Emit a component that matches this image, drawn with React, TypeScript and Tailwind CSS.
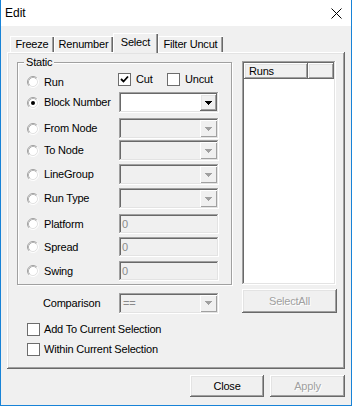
import React from 'react';

const raised =
  'shadow-[inset_-1px_-1px_#696969,inset_1px_1px_#ffffff,inset_-2px_-2px_#a0a0a0,inset_2px_2px_#e3e3e3]';
const sunken =
  'shadow-[inset_-1px_-1px_#ffffff,inset_1px_1px_#a0a0a0,inset_-2px_-2px_#e3e3e3,inset_2px_2px_#696969]';

const Radio: React.FC<{ checked?: boolean }> = ({ checked }) => (
  <svg width="12" height="12" viewBox="0 0 12 12" className="shrink-0">
    <circle cx="6" cy="6" r="5" fill="#ffffff" />
    <path d="M 2.11 9.89 A 5.5 5.5 0 0 1 9.89 2.11" stroke="#a0a0a0" fill="none" />
    <path d="M 9.89 2.11 A 5.5 5.5 0 0 1 2.11 9.89" stroke="#ffffff" fill="none" />
    <path d="M 2.82 9.18 A 4.5 4.5 0 0 1 9.18 2.82" stroke="#b4b4b4" fill="none" />
    <path d="M 9.18 2.82 A 4.5 4.5 0 0 1 2.82 9.18" stroke="#e3e3e3" fill="none" />
    {checked && <circle cx="6" cy="6" r="2" fill="#000000" />}
  </svg>
);

const Check: React.FC<{ checked?: boolean }> = ({ checked }) => (
  <div className="w-[13px] h-[13px] shrink-0 bg-white border border-[#6d6d6d] flex items-center justify-center">
    {checked && (
      <svg width="9" height="9" viewBox="0 0 9 9">
        <polyline points="1,4 3.5,6.5 8,1.5" stroke="#000000" strokeWidth="1.8" fill="none" />
      </svg>
    )}
  </div>
);

const Arrow: React.FC<{ on?: boolean }> = ({ on }) => (
  <svg width="7" height="4" viewBox="0 0 7 4" shapeRendering="crispEdges">
    <polygon points="0,0 7,0 3.5,4" fill={on ? '#000000' : '#a0a0a0'} />
  </svg>
);

const Combo: React.FC<{ on?: boolean; text?: string }> = ({ on, text }) => (
  <div className={`w-[100px] h-[21px] flex p-[2px] ${sunken} ${on ? 'bg-white' : 'bg-[#f0f0f0]'}`}>
    <div className="flex-1 pl-[2px] flex items-center text-[#8a8a8a]">{text}</div>
    <div className={`w-[17px] flex items-center justify-center bg-[#f0f0f0] ${on ? raised : 'shadow-[inset_1px_1px_#ffffff,inset_-1px_-1px_#a0a0a0]'}`}>
      <Arrow on={on} />
    </div>
  </div>
);

const Edit: React.FC = () => (
  <div className={`w-[100px] h-[20px] flex items-center pl-[3px] bg-[#f0f0f0] text-[#8a8a8a] ${sunken}`}>0</div>
);

const Row: React.FC<{ label: string; checked?: boolean; mt: string; h: string; children: React.ReactNode }> = ({
  label,
  checked,
  mt,
  h,
  children,
}) => (
  <div className={`flex items-center ${mt} ${h}`}>
    <Radio checked={checked} />
    <span className="ml-[5px] w-[75px]">{label}</span>
    {children}
  </div>
);

const disabledText = 'text-[#a0a0a0] [text-shadow:1px_1px_0_#ffffff]';

export default function App() {
  return (
    <div className="w-[352px] h-[406px] bg-[#f0f0f0] border-x border-b border-[#1883d7] flex flex-col font-['Liberation_Sans',Arial,sans-serif] text-[11px] tracking-[-0.2px] text-black leading-none">
      {/* title bar */}
      <div className="h-[26px] bg-white flex items-center justify-between pl-[4px] pr-[9px] shrink-0 tracking-normal">
        <span className="text-[12px]">Edit</span>
        <svg width="11" height="11" viewBox="0 0 11 11">
          <path d="M0.5 0.5 L10.5 10.5 M10.5 0.5 L0.5 10.5" stroke="#000000" strokeWidth="1" />
        </svg>
      </div>

      <div className="pt-[7px] pl-[6px]">
        {/* tabs */}
        <div className="flex items-end h-[19px] pl-[3px]">
          <div className="w-[44px] h-[16px] flex items-center justify-center shadow-[inset_1px_1px_#ffffff,inset_-1px_0_#696969,inset_-2px_0_#a0a0a0]">
            Freeze
          </div>
          <div className="w-[59px] h-[16px] flex items-center justify-center shadow-[inset_1px_1px_#ffffff,inset_-1px_0_#696969,inset_-2px_0_#a0a0a0]">
            Renumber
          </div>
          <div className="relative z-10 w-[45px] h-[20px] -mb-[1px] pb-[2px] bg-[#f0f0f0] flex items-center justify-center shadow-[inset_1px_1px_#ffffff,inset_-1px_0_#696969,inset_-2px_0_#a0a0a0]">
            Select
          </div>
          <div className="w-[65px] h-[16px] flex items-center justify-center shadow-[inset_1px_1px_#ffffff,inset_-1px_0_#696969,inset_-2px_0_#a0a0a0]">
            Filter Uncut
          </div>
        </div>

        {/* tab page */}
        <div className={`w-[338px] h-[317px] pt-[10px] pl-[10px] flex gap-[10px] ${raised}`}>
          <div className="w-[215px] flex flex-col">
            <div className="relative h-[223px] border border-[#a0a0a0] shadow-[inset_1px_1px_#ffffff,1px_1px_#ffffff] pl-[9px] pt-[10px]">
              <span className="absolute left-[6px] -top-[6px] px-[2px] bg-[#f0f0f0]">Static</span>
              <div className="flex items-center h-[18px]">
                <Radio />
                <span className="ml-[5px] w-[74px]">Run</span>
                <div className="self-start flex items-center">
                  <Check checked />
                  <span className="ml-[5px] w-[31px]">Cut</span>
                  <Check />
                  <span className="ml-[5px]">Uncut</span>
                </div>
              </div>
              <Row label="Block Number" checked mt="mt-[1px]" h="h-[21px]">
                <Combo on />
              </Row>
              <Row label="From Node" mt="mt-[5px]" h="h-[21px]">
                <Combo />
              </Row>
              <Row label="To Node" mt="mt-[1px]" h="h-[21px]">
                <Combo />
              </Row>
              <Row label="LineGroup" mt="mt-[3px]" h="h-[21px]">
                <Combo />
              </Row>
              <Row label="Run Type" mt="mt-[3px]" h="h-[21px]">
                <Combo />
              </Row>
              <Row label="Platform" mt="mt-[5px]" h="h-[20px]">
                <Edit />
              </Row>
              <Row label="Spread" mt="mt-[3px]" h="h-[20px]">
                <Edit />
              </Row>
              <Row label="Swing" mt="mt-[4px]" h="h-[20px]">
                <Edit />
              </Row>
            </div>

            <div className="flex items-center mt-[8px] h-[20px]">
              <span className="ml-[26px] w-[76px]">Comparison</span>
              <Combo text="==" />
            </div>
            <div className="flex items-center mt-[10px] pl-[10px]">
              <Check />
              <span className="ml-[4px]">Add To Current Selection</span>
            </div>
            <div className="flex items-center mt-[7px] pl-[10px]">
              <Check />
              <span className="ml-[4px]">Within Current Selection</span>
            </div>
          </div>

          <div className="w-[95px] flex flex-col -mt-[1px]">
            <div className={`w-[94px] h-[224px] bg-white p-[2px] ${sunken}`}>
              <div className="flex h-[16px]">
                <div className={`w-[64px] pl-[5px] flex items-center bg-[#f0f0f0] ${raised}`}>Runs</div>
                <div className={`flex-1 bg-[#f0f0f0] ${raised}`} />
              </div>
            </div>
            <div className={`mt-[4px] h-[24px] flex items-center justify-center ${raised} ${disabledText}`}>
              SelectAll
            </div>
          </div>
        </div>
      </div>

      {/* dialog buttons */}
      <div className="flex justify-end gap-[6px] mt-[6px] pr-[6px]">
        <div className={`w-[74px] h-[22px] flex items-center justify-center ${raised}`}>Close</div>
        <div className={`w-[75px] h-[22px] flex items-center justify-center ${raised} ${disabledText}`}>Apply</div>
      </div>
    </div>
  );
}
